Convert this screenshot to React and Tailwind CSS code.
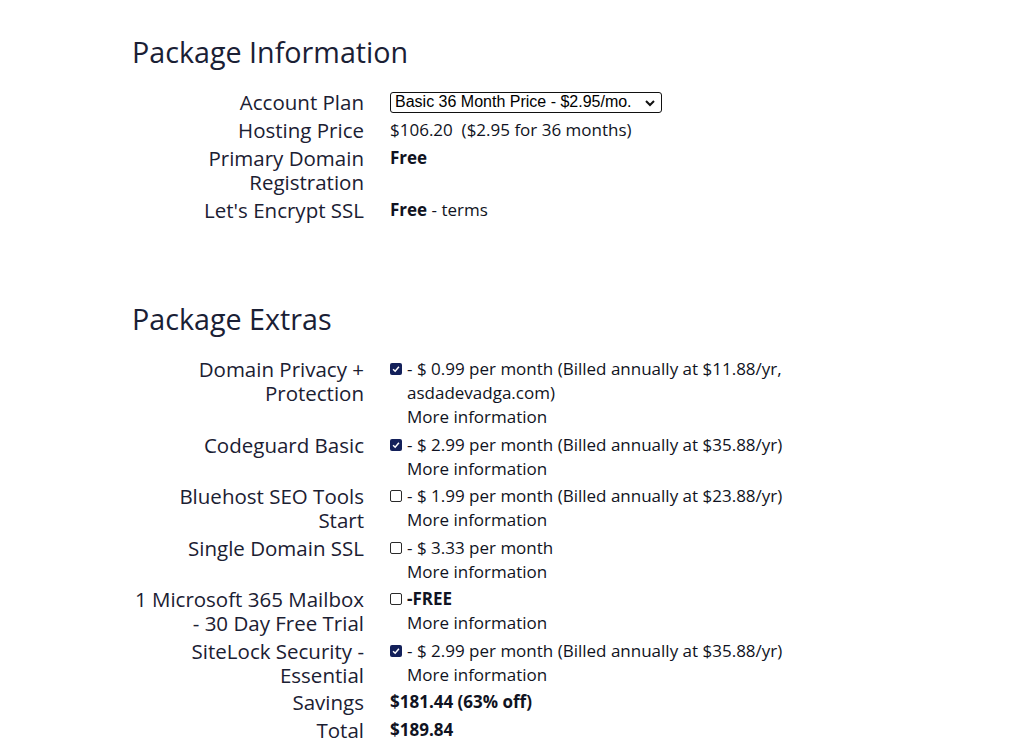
import React from "react";

const labelCls =
  "text-right text-[20.5px] leading-[24px] text-[#1b2032] font-['Open_Sans',sans-serif]";
const valueCls =
  "text-[17px] leading-[24px] text-[#101322] font-['Open_Sans',sans-serif]";

function Check({ on }) {
  if (on) {
    return (
      <span className="mt-[6px] inline-flex h-[12px] w-[12px] shrink-0 items-center justify-center rounded-[2px] bg-[#13205a]">
        <svg viewBox="0 0 12 12" className="h-[10px] w-[10px]">
          <path d="M2.5 6.2 L5 8.6 L9.5 3.2" fill="none" stroke="#fff" strokeWidth="1.8" />
        </svg>
      </span>
    );
  }
  return (
    <span className="mt-[6px] inline-block h-[12px] w-[12px] shrink-0 rounded-[2px] border border-[#2a2a2a] bg-white" />
  );
}

function Extra({ on, children }) {
  return (
    <div className={valueCls}>
      <div className="flex">
        <Check on={on} />
        <div className="ml-[5px] max-w-[395px]">{children}</div>
      </div>
      <div className="pl-[17px]">More information</div>
    </div>
  );
}

const extras = [
  {
    label: ["Domain Privacy +", "Protection"],
    on: true,
    text: "- $ 0.99 per month (Billed annually at $11.88/yr, asdadevadga.com)",
  },
  { label: ["Codeguard Basic"], on: true, text: "- $ 2.99 per month (Billed annually at $35.88/yr)" },
  { label: ["Bluehost SEO Tools", "Start"], on: false, text: "- $ 1.99 per month (Billed annually at $23.88/yr)" },
  { label: ["Single Domain SSL"], on: false, text: "- $ 3.33 per month" },
  { label: ["1 Microsoft 365 Mailbox", "- 30 Day Free Trial"], on: false, free: true },
  { label: ["SiteLock Security -", "Essential"], on: true, text: "- $ 2.99 per month (Billed annually at $35.88/yr)" },
];

function Label({ lines }) {
  return (
    <div className={labelCls}>
      {lines.map((l) => (
        <div key={l}>{l}</div>
      ))}
    </div>
  );
}

export default function App() {
  return (
    <div className="min-h-screen bg-white pl-[132px] pt-[34px]">
      {/* Package Information */}
      <h2 className="mb-[20px] text-[28.7px] leading-[36px] text-[#1a2035] font-['Open_Sans',sans-serif]">
        Package Information
      </h2>
      <div className="grid grid-cols-[232px_1fr] gap-x-[26px] gap-y-[4px]">
        <Label lines={["Account Plan"]} />
        <div className="flex items-center">
          <div className="relative inline-flex h-[21px] w-[272px] items-center rounded-[3px] border border-[#111] pl-[4px] text-[16px] text-black font-['Liberation_Sans',Arial,sans-serif]">
            Basic 36 Month Price - $2.95/mo.
            <svg viewBox="0 0 12 12" className="absolute right-[5px] top-[4px] h-[12px] w-[12px]">
              <path d="M2 4 L6 8 L10 4" fill="none" stroke="#111" strokeWidth="2" />
            </svg>
          </div>
        </div>

        <Label lines={["Hosting Price"]} />
        <div className={valueCls}>$106.20&nbsp; ($2.95 for 36 months)</div>

        <Label lines={["Primary Domain", "Registration"]} />
        <div className={valueCls}>
          <b>Free</b>
        </div>

        <Label lines={["Let's Encrypt SSL"]} />
        <div className={valueCls}>
          <b>Free</b> - terms
        </div>
      </div>

      {/* Package Extras */}
      <h2 className="mb-[20px] mt-[79px] text-[28.7px] leading-[36px] text-[#1a2035] font-['Open_Sans',sans-serif]">
        Package Extras
      </h2>
      <div className="grid grid-cols-[232px_1fr] gap-x-[26px] gap-y-[3.5px]">
        {extras.map((e) => (
          <React.Fragment key={e.label[0]}>
            <Label lines={e.label} />
            <Extra on={e.on}>{e.free ? <b>-FREE</b> : e.text}</Extra>
          </React.Fragment>
        ))}

        <Label lines={["Savings"]} />
        <div className={valueCls}>
          <b>$181.44 (63% off)</b>
        </div>

        <Label lines={["Total"]} />
        <div className={valueCls}>
          <b>$189.84</b>
        </div>
      </div>
    </div>
  );
}
